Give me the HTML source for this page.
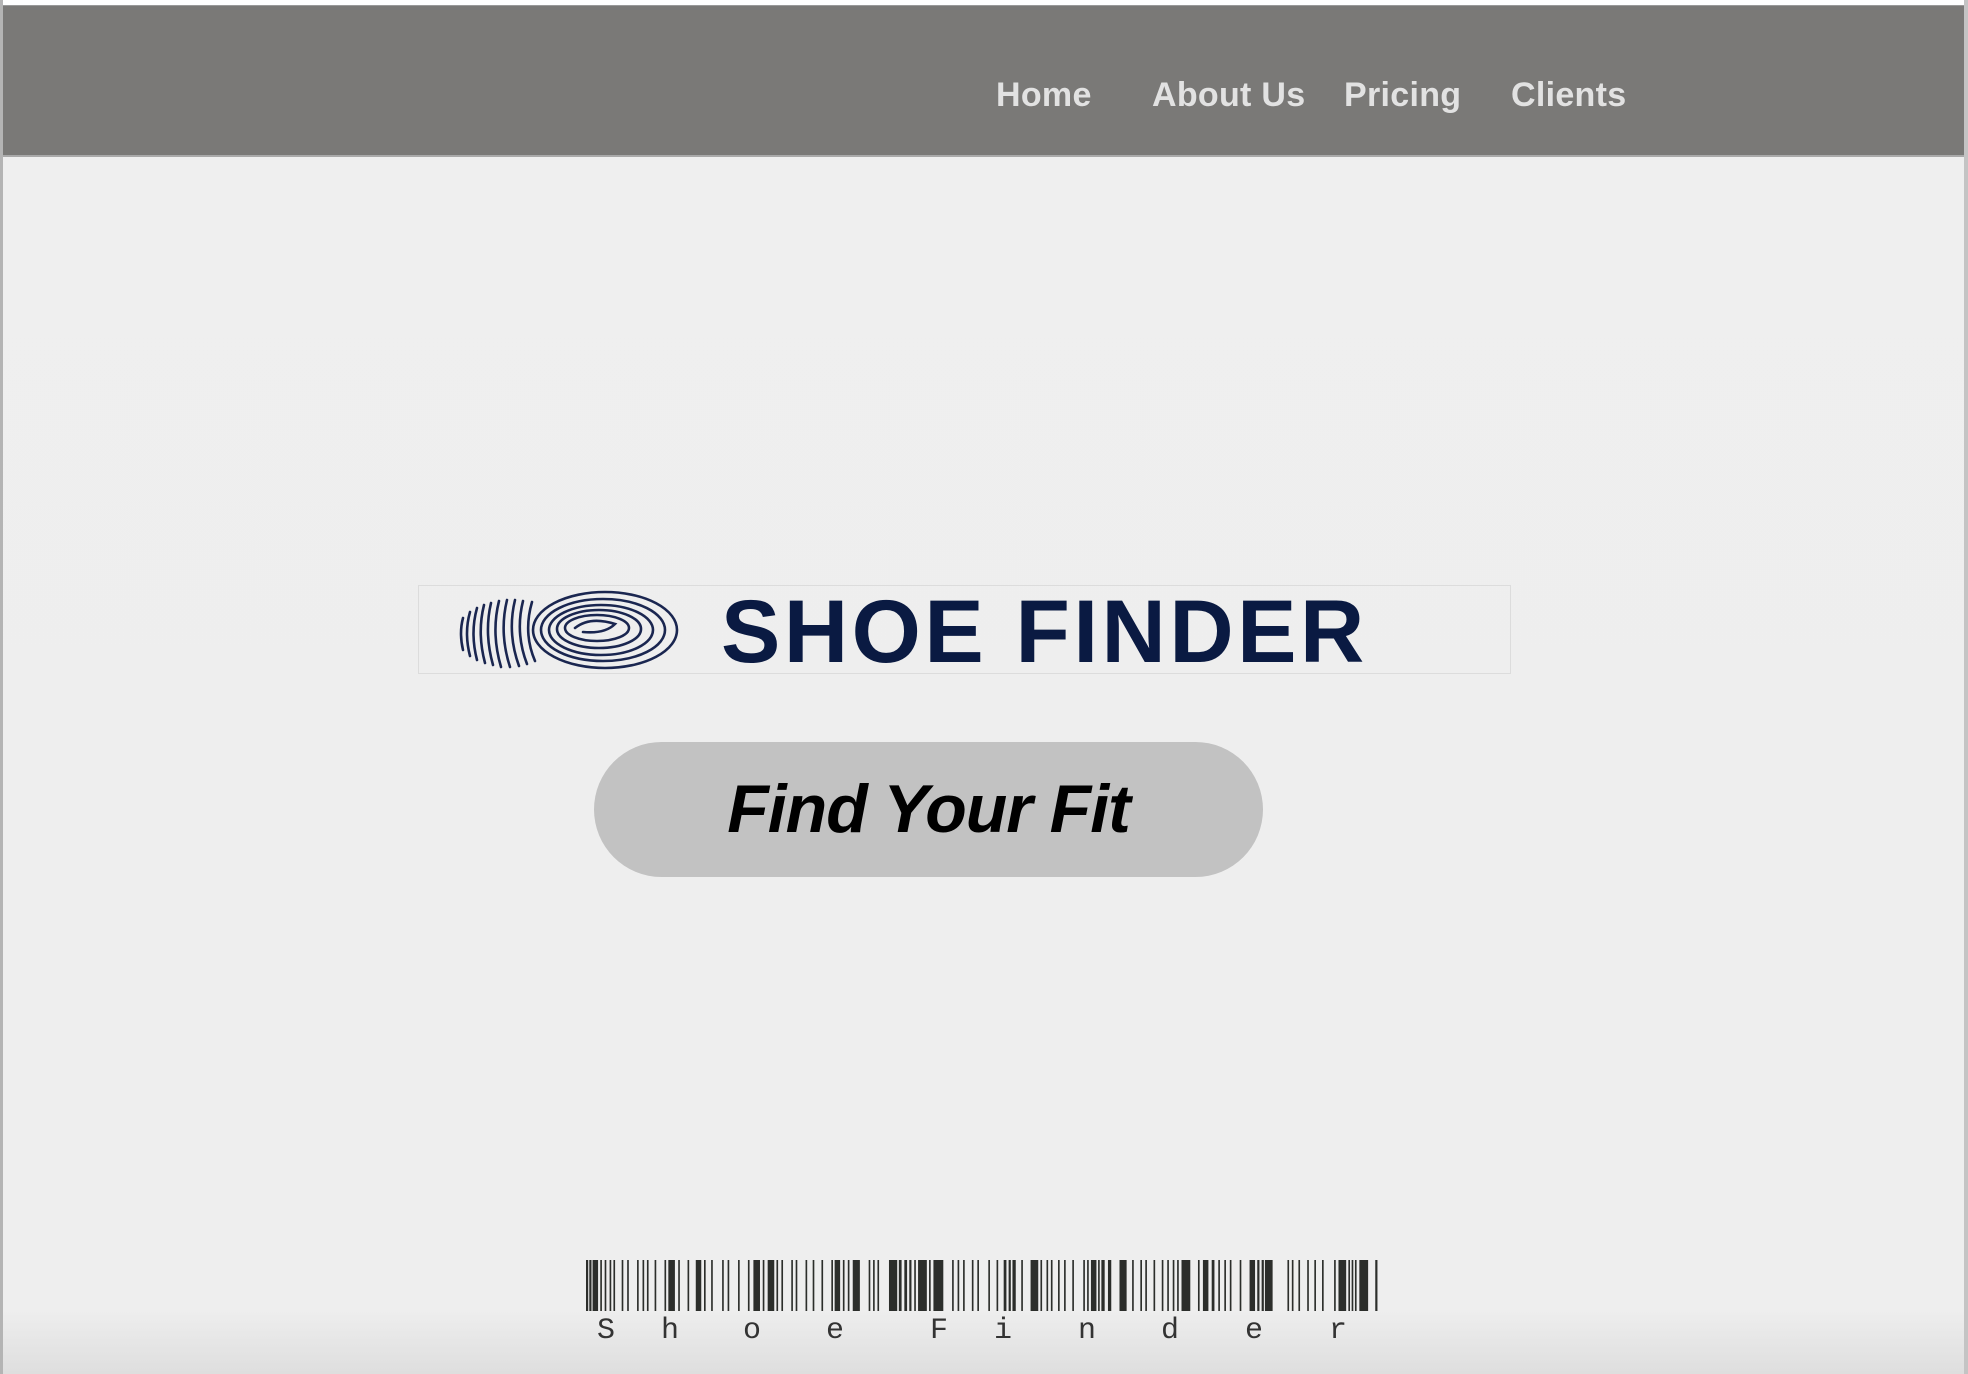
<!DOCTYPE html>
<html><head><meta charset="utf-8"><style>
html,body{margin:0;padding:0;}
body{width:1968px;height:1374px;position:relative;overflow:hidden;background:linear-gradient(#efefef 0,#eeeeee 1310px,#dedede 1374px);font-family:"Liberation Sans",sans-serif;}
.top{position:absolute;left:0;top:0;width:1968px;height:5px;background:#fff;}
.hdr{position:absolute;left:0;top:5px;width:1964px;height:152px;background:#7a7977;border-top:1px solid #999;border-bottom:2px solid #a9a9a9;box-sizing:border-box;}
.lb{position:absolute;left:0;top:0;width:3px;height:1374px;background:#b4b4b4;}
.rb{position:absolute;left:1964px;top:0;width:4px;height:1374px;background:#c4c4c4;}
.nav{position:absolute;top:76px;font-weight:bold;font-size:34px;color:#e2e2e2;letter-spacing:0.3px;}
.logo{position:absolute;left:418px;top:585px;width:1093px;height:89px;border:1px solid #dcdcdc;box-sizing:border-box;}
.lt{position:absolute;left:721px;top:580px;font-size:89px;font-weight:900;color:#0a1a42;letter-spacing:3.5px;white-space:nowrap;}
.btn{position:absolute;left:594px;top:742px;width:669px;height:135px;border-radius:68px;background:#c2c2c2;}
.bt{position:absolute;left:594px;top:770px;width:669px;text-align:center;font-size:68px;font-weight:bold;font-style:italic;color:#000;letter-spacing:-1px;}
.bc{position:absolute;left:586px;top:1260px;width:792px;height:51px;}
.ch{position:absolute;top:1314px;font-family:"Liberation Mono","DejaVu Sans Mono",monospace;font-size:30px;color:#333;}
</style></head><body>
<div class="top"></div>
<div class="hdr"></div>
<div class="lb"></div><div class="rb"></div>
<div class="nav" style="left:996px">Home</div>
<div class="nav" style="left:1152px">About Us</div>
<div class="nav" style="left:1344px">Pricing</div>
<div class="nav" style="left:1511px">Clients</div>
<div class="logo"></div>
<svg style="position:absolute;left:455px;top:588px" width="230" height="86" viewBox="0 0 230 86" fill="none" stroke="#1a2650" stroke-width="2.6" stroke-linecap="round">
<path d="M8 30 Q4 45 8 62"/><path d="M15 24 Q9 45 15 68"/><path d="M22 20 Q15 45 22 72"/><path d="M29 17 Q22 45 30 75"/><path d="M36 15 Q29 45 38 77"/><path d="M44 13 Q36 45 46 79"/><path d="M52 12 Q44 45 55 79"/><path d="M60 12 Q52 45 64 78"/><path d="M68 13 Q60 45 72 76"/><path d="M77 14 Q68 45 80 73"/>
<ellipse cx="150" cy="42" rx="72" ry="38"/><ellipse cx="148" cy="42" rx="62" ry="31"/><ellipse cx="146" cy="42" rx="52" ry="25"/><ellipse cx="144" cy="41" rx="42" ry="19"/><ellipse cx="142" cy="40" rx="32" ry="13"/><path d="M120 40 Q135 28 160 36 Q150 46 128 44"/>
</svg>
<div class="lt">SHOE FINDER</div>
<div class="btn"></div>
<div class="bt">Find Your Fit</div>
<svg class="bc" viewBox="47 0 1443 1" preserveAspectRatio="none" fill="#2c2e2b">
<rect x="47" y="0" width="4" height="1"/><rect x="53" y="0" width="4" height="1"/><rect x="59" y="0" width="10" height="1"/><rect x="73" y="0" width="3" height="1"/><rect x="81" y="0" width="3" height="1"/><rect x="90" y="0" width="3" height="1"/><rect x="97" y="0" width="3" height="1"/><rect x="112" y="0" width="3" height="1"/><rect x="122" y="0" width="3" height="1"/><rect x="140" y="0" width="3" height="1"/><rect x="150" y="0" width="3" height="1"/><rect x="158" y="0" width="3" height="1"/><rect x="172" y="0" width="3" height="1"/><rect x="190" y="0" width="3" height="1"/><rect x="197" y="0" width="12" height="1"/><rect x="215" y="0" width="3" height="1"/><rect x="232" y="0" width="3" height="1"/><rect x="247" y="0" width="10" height="1"/><rect x="262" y="0" width="3" height="1"/><rect x="275" y="0" width="3" height="1"/><rect x="295" y="0" width="3" height="1"/><rect x="305" y="0" width="3" height="1"/><rect x="324" y="0" width="3" height="1"/><rect x="342" y="0" width="3" height="1"/><rect x="352" y="0" width="12" height="1"/><rect x="369" y="0" width="3" height="1"/><rect x="378" y="0" width="12" height="1"/><rect x="394" y="0" width="3" height="1"/><rect x="403" y="0" width="3" height="1"/><rect x="421" y="0" width="3" height="1"/><rect x="429" y="0" width="3" height="1"/><rect x="447" y="0" width="3" height="1"/><rect x="460" y="0" width="3" height="1"/><rect x="476" y="0" width="3" height="1"/><rect x="494" y="0" width="3" height="1"/><rect x="500" y="0" width="10" height="1"/><rect x="515" y="0" width="3" height="1"/><rect x="524" y="0" width="3" height="1"/><rect x="533" y="0" width="13" height="1"/><rect x="562" y="0" width="3" height="1"/><rect x="570" y="0" width="3" height="1"/><rect x="578" y="0" width="3" height="1"/><rect x="599" y="0" width="15" height="1"/><rect x="617" y="0" width="5" height="1"/><rect x="627" y="0" width="5" height="1"/><rect x="636" y="0" width="4" height="1"/><rect x="645" y="0" width="3" height="1"/><rect x="652" y="0" width="16" height="1"/><rect x="672" y="0" width="3" height="1"/><rect x="680" y="0" width="18" height="1"/><rect x="714" y="0" width="3" height="1"/><rect x="724" y="0" width="3" height="1"/><rect x="734" y="0" width="3" height="1"/><rect x="750" y="0" width="3" height="1"/><rect x="760" y="0" width="3" height="1"/><rect x="780" y="0" width="3" height="1"/><rect x="795" y="0" width="3" height="1"/><rect x="808" y="0" width="5" height="1"/><rect x="817" y="0" width="4" height="1"/><rect x="824" y="0" width="6" height="1"/><rect x="840" y="0" width="3" height="1"/><rect x="857" y="0" width="14" height="1"/><rect x="875" y="0" width="3" height="1"/><rect x="886" y="0" width="3" height="1"/><rect x="894" y="0" width="3" height="1"/><rect x="907" y="0" width="3" height="1"/><rect x="918" y="0" width="3" height="1"/><rect x="933" y="0" width="3" height="1"/><rect x="953" y="0" width="3" height="1"/><rect x="960" y="0" width="3" height="1"/><rect x="967" y="0" width="10" height="1"/><rect x="980" y="0" width="3" height="1"/><rect x="986" y="0" width="6" height="1"/><rect x="998" y="0" width="6" height="1"/><rect x="1019" y="0" width="13" height="1"/><rect x="1042" y="0" width="3" height="1"/><rect x="1057" y="0" width="3" height="1"/><rect x="1066" y="0" width="3" height="1"/><rect x="1081" y="0" width="3" height="1"/><rect x="1096" y="0" width="3" height="1"/><rect x="1106" y="0" width="3" height="1"/><rect x="1116" y="0" width="3" height="1"/><rect x="1124" y="0" width="3" height="1"/><rect x="1132" y="0" width="16" height="1"/><rect x="1162" y="0" width="3" height="1"/><rect x="1171" y="0" width="10" height="1"/><rect x="1187" y="0" width="5" height="1"/><rect x="1199" y="0" width="3" height="1"/><rect x="1210" y="0" width="3" height="1"/><rect x="1220" y="0" width="3" height="1"/><rect x="1238" y="0" width="3" height="1"/><rect x="1256" y="0" width="10" height="1"/><rect x="1270" y="0" width="4" height="1"/><rect x="1278" y="0" width="4" height="1"/><rect x="1284" y="0" width="14" height="1"/><rect x="1325" y="0" width="3" height="1"/><rect x="1333" y="0" width="3" height="1"/><rect x="1345" y="0" width="3" height="1"/><rect x="1361" y="0" width="3" height="1"/><rect x="1374" y="0" width="3" height="1"/><rect x="1388" y="0" width="3" height="1"/><rect x="1410" y="0" width="3" height="1"/><rect x="1418" y="0" width="14" height="1"/><rect x="1436" y="0" width="3" height="1"/><rect x="1442" y="0" width="3" height="1"/><rect x="1448" y="0" width="3" height="1"/><rect x="1456" y="0" width="16" height="1"/><rect x="1485" y="0" width="4" height="1"/>
</svg>
<div class="ch" style="left:597px">S</div>
<div class="ch" style="left:661px">h</div>
<div class="ch" style="left:743px">o</div>
<div class="ch" style="left:826px">e</div>
<div class="ch" style="left:930px">F</div>
<div class="ch" style="left:994px">i</div>
<div class="ch" style="left:1078px">n</div>
<div class="ch" style="left:1161px">d</div>
<div class="ch" style="left:1245px">e</div>
<div class="ch" style="left:1329px">r</div>
</body></html>
